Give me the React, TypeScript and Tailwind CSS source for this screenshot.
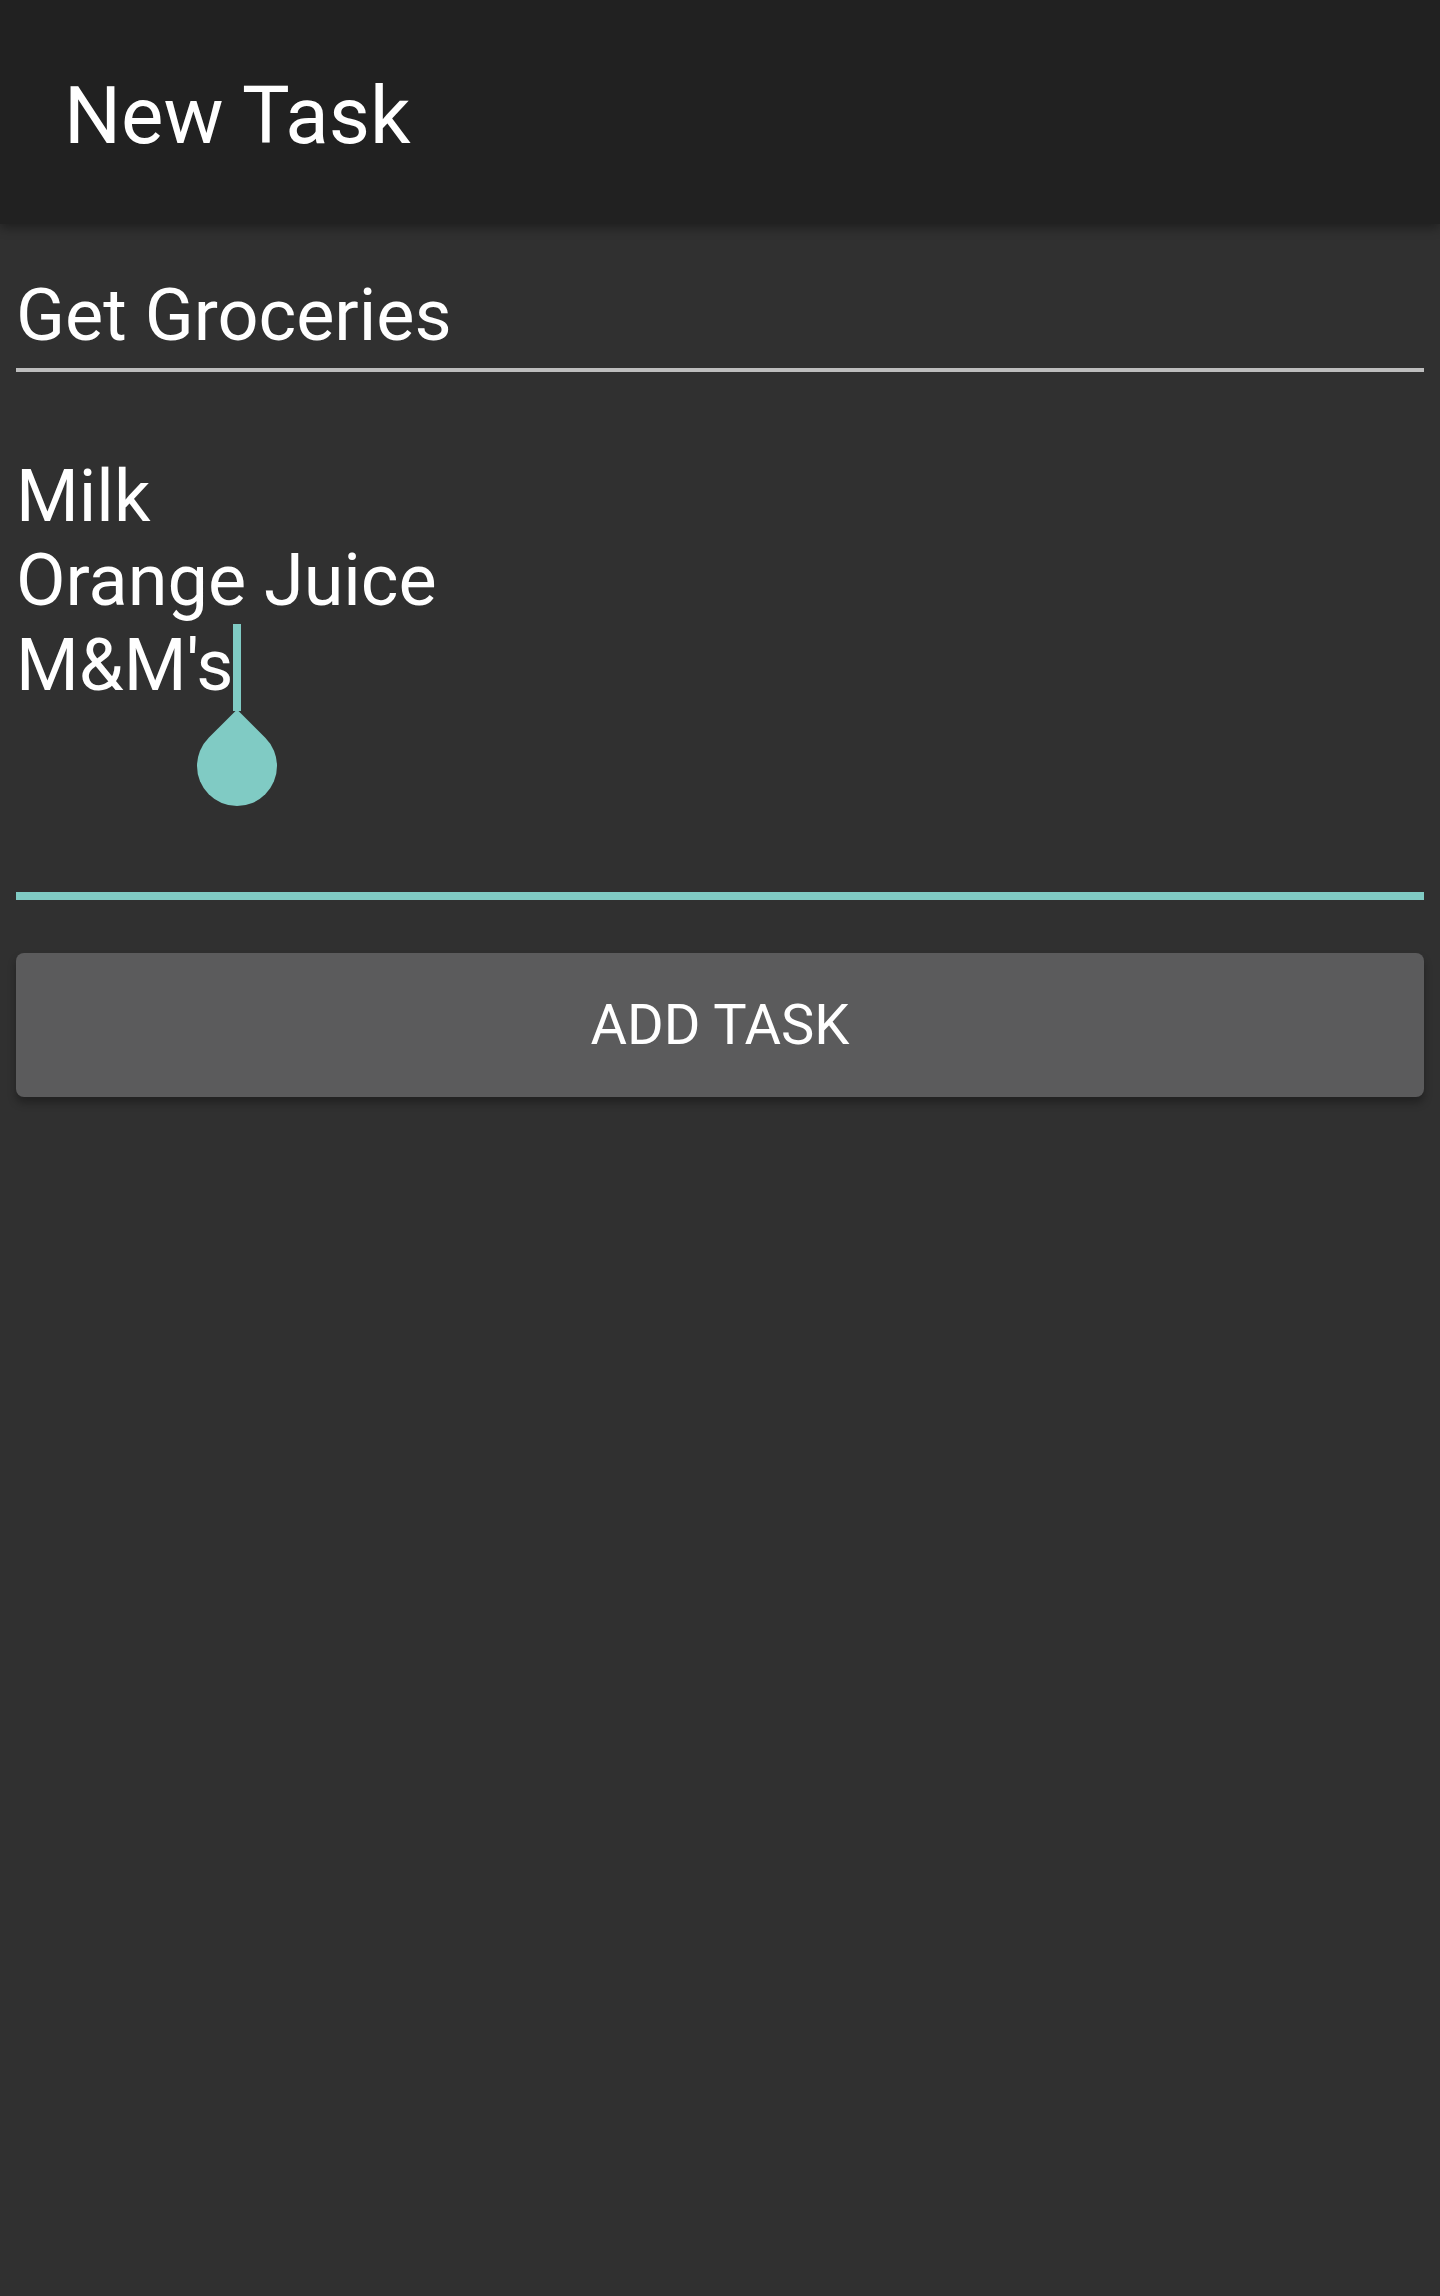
import { FC } from 'react';

const font = { fontFamily: 'Roboto, "Noto Sans", sans-serif' };

const Toolbar: FC<{ title: string }> = ({ title }) => (
    <header className='relative z-10 h-[224px] bg-[#212121] flex items-center pt-2 px-[64px] shadow-[0_4px_10px_rgba(0,0,0,0.35)]'>
        <h1 className='text-[80px] leading-normal text-white'>{title}</h1>
    </header>
);

// text cursor + teal drop handle
const Cursor = () => (
    <span className='relative inline-block align-top w-[8px] h-[87px] bg-[#80cbc4]'>
        <span className='absolute left-[-36px] top-[102px] w-[80px] h-[80px] rounded-full rounded-tl-none rotate-45 bg-[#80cbc4]' />
    </span>
);

const App: FC = () => {
    const lines = ['Milk', 'Orange Juice'];
    return (
        <div style={font} className='min-h-[2296px] bg-[#303030] flex flex-col'>
            <Toolbar title='New Task' />
            <main className='px-[16px] flex flex-col'>
                <div className='pt-[50px]'>
                    <p className='text-[72px] leading-[84px] text-white'>Get Groceries</p>
                    <div className='mt-[10px] h-[4px] bg-[#bdbdbd]' />
                </div>
                <div className='pt-[83px]'>
                    <div className='text-[72px] leading-[84.4px] text-white'>
                        {lines.map((l) => <div key={l}>{l}</div>)}
                        <div className='whitespace-nowrap'>M&amp;M's<Cursor /></div>
                    </div>
                    <div className='mt-[181px] h-[8px] bg-[#80cbc4]' />
                </div>
                <button className='mt-[53px] h-[144px] w-full rounded-[8px] bg-[#5b5b5c] text-white text-[56px] uppercase shadow-[0_6px_8px_rgba(0,0,0,0.3)]'>
                    Add Task
                </button>
            </main>
        </div>
    );
};

export default App;
